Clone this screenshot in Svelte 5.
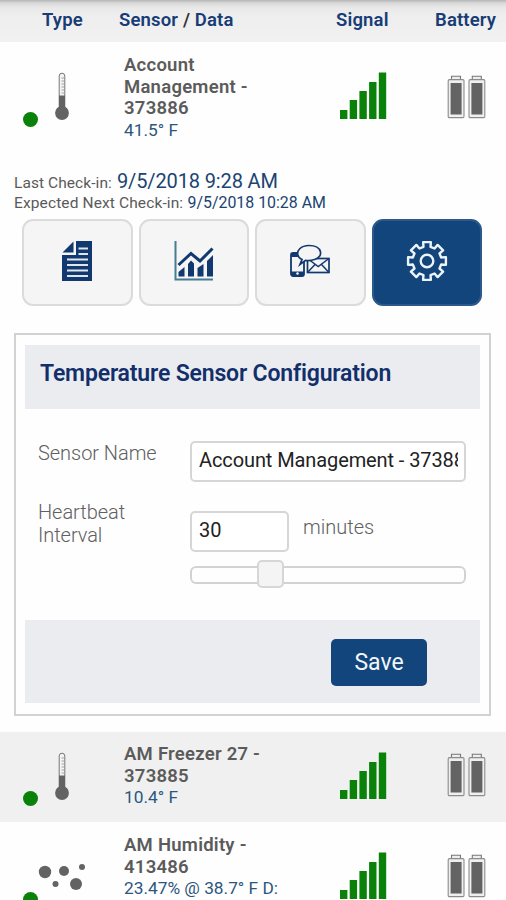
<script>
  const bars = [9, 19, 28, 37, 46.5];
  const sensors = [
    { kind: 'temp', name: ['AM Freezer 27 -', '373885'], data: '10.4° F', cls: 'shaded' },
    { kind: 'humidity', name: ['AM Humidity -', '413486'], data: '23.47% @ 38.7° F D:', cls: 'last' }
  ];
  let sensorName = $state('Account Management - 373886');
  let interval = $state('30');

  // Eight-toothed gear: [radius, offset in degrees] for each corner of a tooth.
  const tooth = [[14.6, -14], [19.3, -11.5], [19.3, 11.5], [14.6, 14]];
  const gear = Array.from({ length: 8 }, (_, i) =>
    tooth.map(([r, d]) => {
      const a = ((i * 45 + d) * Math.PI) / 180;
      return `${(r * Math.sin(a)).toFixed(2)},${(-r * Math.cos(a)).toFixed(2)}`;
    }).join(' ')
  ).join(' ');
</script>

{#snippet row(s)}
  <div class="row {s.cls}">
    <div class="type">
      <span class="dot"></span>
      {#if s.kind === 'temp'}
        <svg class="thermo" width="16" height="50" viewBox="0 0 16 50">
          <path d="M5.2 36V4a2.8 2.8 0 0 1 5.6 0V36" fill="#f4f4f4" stroke="#777" stroke-width="1" />
          <path d="M5 23.5h6v12.5H5z" fill="#636363" />
          <path d="M7.5 6h2.5M7.5 9h2.5M7.5 12h2.5M7.5 15h2.5M7.5 18h2.5M7.5 21h2.5" stroke="#999" stroke-width=".9" />
          <circle cx="8" cy="41" r="6.9" fill="#636363" />
        </svg>
      {:else}
        <svg class="drops" width="50" height="30" viewBox="0 0 50 30" fill="#636363">
          <circle cx="7" cy="12" r="6.2" />
          <circle cx="26" cy="11" r="5" />
          <circle cx="44" cy="7" r="3" />
          <circle cx="17.5" cy="24" r="3" />
          <circle cx="38" cy="24" r="6" />
        </svg>
      {/if}
    </div>
    <div class="info">
      {#each s.name as line}<div class="name">{line}</div>{/each}
      <div class="data">{s.data}</div>
    </div>
    <div class="signal">
      <svg width="47" height="47" viewBox="0 0 47 47" fill="#0a820a">
        {#each bars as h, i}
          <rect x={i * 9.7} y={47 - h} width="7.4" height={h} />
        {/each}
      </svg>
    </div>
    <div class="battery">
      <svg width="40" height="44" viewBox="0 0 40 44">
        {#each [0, 20.8] as x}
          <g transform="translate({x} 0)">
            <path d="M4.5 4.5V1.2h9V4.5" fill="#eee" stroke="#777" stroke-width="1.1" />
            <rect x="1.2" y="4.6" width="15.8" height="38" rx="1.2" fill="#efefef" stroke="#8c8c8c" stroke-width="1.1" />
            <rect x="3.6" y="8" width="11" height="31.5" fill="#636363" />
          </g>
        {/each}
      </svg>
    </div>
  </div>
{/snippet}

<div class="screen">
  <header class="head">
    <span class="h-type">Type</span>
    <span class="h-data">Sensor <i>/</i> Data</span>
    <span class="h-signal">Signal</span>
    <span class="h-battery">Battery</span>
  </header>

  {@render row({ kind: 'temp', name: ['Account', 'Management -', '373886'], data: '41.5° F', cls: 'first' })}

  <section class="checkins">
    <div class="line"><span class="cap one">Last Check-in:</span><b class="big">9/5/2018 9:28 AM</b></div>
    <div class="line"><span class="cap two">Expected Next Check-in:</span><b class="small">9/5/2018 10:28 AM</b></div>
  </section>

  <nav class="tabs">
    <button aria-label="Details">
      <svg width="32" height="42" viewBox="0 0 32 42">
        <path d="M15 1h16v40H1V15h14z" fill="#12396f" />
        <path d="M1.5 12.5L12.5 1.5v11z" fill="#12396f" />
        <path d="M17.5 8.5H27M17.5 14H27M6 19.5h21M6 25h21M6 30.5h21M6 36h21" stroke="#dfe5ef" stroke-width="2" />
      </svg>
    </button>
    <button aria-label="Chart">
      <svg width="40" height="42" viewBox="0 0 40 42">
        <path d="M1.5 1v38.5H39" fill="none" stroke="#467c94" stroke-width="2" />
        <path d="M4.5 25L17 13.5l9 7.5L38.5 8.5" fill="none" stroke="#12396f" stroke-width="3" />
        <path d="M4.5 32l6-5v9.5h-6zM14 24l3-3.5 3 3v13h-6zM23.5 28l6-4v12.5h-6zM33 21l6-6v21.5h-6z" fill="#12396f" />
      </svg>
    </button>
    <button aria-label="Notifications">
      <svg width="42" height="34" viewBox="0 0 42 34" fill="none" stroke="#12396f">
        <rect x="2" y="9" width="13" height="23" rx="2" fill="#f5f5f5" stroke-width="1.8" />
        <path d="M2 11h13M2 29.5h13" stroke-width="4" />
        <circle cx="8.5" cy="29.5" r="1.2" fill="#fff" stroke="none" />
        <rect x="18.5" y="14.5" width="21.5" height="14" fill="#f5f5f5" stroke-width="1.7" />
        <path d="M18.5 14.5l10.7 8L40 14.5M18.5 28.5l7.5-8M40 28.5l-7.5-8" stroke-width="1.5" />
        <path d="M13 15.5C8 13.5 7.5 8 10.5 5S17 1.500 20 1.5C33.5 1.5 35 13 25.5 15.5C21.5 16.8 19 16.8 16.5 16.3L11 20.5Z" fill="#f5f5f5" stroke-width="1.7" />
      </svg>
    </button>
    <button class="active" aria-label="Settings">
      <svg width="42" height="42" viewBox="-21 -21 42 42" fill="none" stroke="#edf3fb" stroke-width="2.4" stroke-linejoin="round">
        <polygon points={gear} />
        <circle r="6.3" />
      </svg>
    </button>
  </nav>

  <section class="card">
    <h2>Temperature Sensor Configuration</h2>
    <div class="form">
      <div class="field name-field">
        <label for="sname">Sensor Name</label>
        <input id="sname" class="wide" bind:value={sensorName} />
      </div>
      <div class="field beat-field">
        <label for="beat">Heartbeat<br />Interval</label>
        <input id="beat" class="short" bind:value={interval} />
        <span class="unit">minutes</span>
      </div>
      <div class="slider"><span class="knob"></span></div>
    </div>
    <footer><button class="save">Save</button></footer>
  </section>

  {#each sensors as s}
    {@render row(s)}
  {/each}
</div>

<style>
  :global(body) { background: #fefefe; }
  .screen {
    width: 506px; height: 900px; overflow: hidden; background: #fefefe;
    font-family: Roboto, "Liberation Sans", sans-serif; color: #555;
    white-space: nowrap;
  }
  .screen * { box-sizing: border-box; }
  .head {
    height: 42px; display: flex; padding-top: 8px;
    background: linear-gradient(#b5b5b5 0, #d8d8d8 3px, #e9e9e9 8px, #eeeeee 16px, #f1f1f1 100%);
    font-size: 18.5px; line-height: 24px; font-weight: 600; letter-spacing: .15px; color: #173c76;
  }
  .head i { font-style: normal; color: #333; }
  .h-type { padding-left: 42px; width: 119px; }
  .h-data { width: 217px; }
  .h-signal { width: 99px; }

  .row { display: flex; height: 90px; }
  .row.first { height: 129px; padding-top: 12px; }
  .row.shaded { margin-top: 16px; background: #f0f0f0; padding-top: 11px; }
  .row.last { padding-top: 12px; height: 110px; }
  .type { width: 124px; display: flex; padding-left: 23px; }
  .dot { width: 15px; height: 15px; border-radius: 50%; background: #0a820a; }
  .thermo { margin-left: 16px; }
  .info { width: 216px; padding-top: 1px; }
  .name { font-size: 18.5px; line-height: 21.7px; font-weight: 600; letter-spacing: .25px; color: #5b5b5b; }
  .data { font-size: 17.3px; line-height: 20px; color: #2b5680; }
  .signal { width: 107px; }
  .signal svg, .battery svg, .type svg { display: block; }
  .first .dot { margin-top: 57.5px; }
  .first .thermo, .first .signal { margin-top: 18px; }
  .first .battery { margin-top: 21px; }
  .shaded .dot { margin-top: 48px; }
  .shaded .thermo, .shaded .signal { margin-top: 9px; }
  .shaded .battery { margin-top: 10px; }
  .last .dot { margin-top: 58px; }
  .last .drops { margin-top: 26px; }
  .last .signal { margin-top: 18px; }
  .last .battery { margin-top: 20px; }

  .checkins { height: 48px; padding-left: 14px; }
  .line { display: flex; align-items: baseline; }
  .line:first-child { line-height: 21px; height: 22px; }
  .line:last-child { line-height: 20px; height: 20px; }
  .cap { font-size: 15.5px; color: #5a5a5a; }
  .cap.one { width: 103px; letter-spacing: .07px; }
  .cap.two { width: 173.5px; letter-spacing: .12px; }
  .line b { font-weight: 400; color: #1b4471; }
  .big { font-size: 20px; letter-spacing: -.13px; }
  .small { font-size: 15.9px; }

  .tabs { display: flex; gap: 6px; padding-left: 22px; height: 87px; }
  .tabs button {
    width: 110.5px; height: 87px; padding: 0 0 4px; border: 2px solid #dbdbdb; border-radius: 11px;
    background: #f5f5f5; display: flex; align-items: center; justify-content: center;
  }
  .tabs .active { background: #12457b; border-color: #2a598a; }

  .card { margin: 27px 15px 0 14px; height: 383px; border: 2px solid #d2d2d2; padding: 10px 9px; display: flex; flex-direction: column; }
  h2 {
    margin: 0; height: 64px; padding: 14px 0 0 15px; background: #ebecf0;
    font-size: 23px; line-height: 29px; font-weight: 600; letter-spacing: -.17px; color: #122f6b;
  }
  .form { height: 211px; padding: 32px 0 0 13px; }
  .field { display: flex; align-items: flex-start; }
  label, .unit { font-size: 20px; line-height: 23px; font-weight: 300; color: #606060; }
  label { width: 152px; padding-top: 1px; letter-spacing: -.05px; }
  .name-field { height: 70px; }
  .beat-field { height: 55px; }
  .beat-field label { margin-top: -11px; }
  input {
    height: 41px; border: 2px solid #d6d6d6; border-radius: 5px; background: #fff; outline: none;
    padding: 0 6px 3px 7px; font: 400 20px Roboto, "Liberation Sans", sans-serif; letter-spacing: -.1px; color: #222;
  }
  .wide { width: 276px; }
  .short { width: 99px; }
  .unit { margin: 5px 0 0 14px; }
  .slider { margin-left: 152px; width: 276px; height: 18px; border: 2px solid #d2d2d2; border-radius: 6px; position: relative; }
  .knob { position: absolute; left: 65px; top: -8px; width: 27px; height: 28px; border: 2px solid #d6d6d6; border-radius: 5px; background: #f4f4f4; }
  footer { height: 83px; background: #ebecf0; padding-top: 19px; display: flex; justify-content: flex-end; padding-right: 53px; }
  .save {
    width: 96px; height: 47px; border: 0; border-radius: 5px; background: #12457b; color: #f1f5fa;
    padding: 0; font: 400 23px Roboto, "Liberation Sans", sans-serif;
  }
</style>
